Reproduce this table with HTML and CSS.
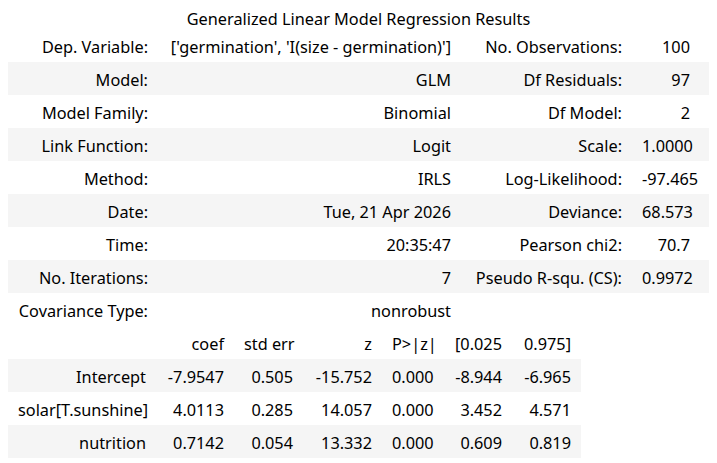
FILE: index.html
```html
<!DOCTYPE html>
<html>
<head>
<meta charset="utf-8">
<title>Generalized Linear Model Regression Results</title>
<link rel="stylesheet" href="styles.css">
</head>
<body>
<div class="summary">
  <table class="simpletable info">
    <caption>Generalized Linear Model Regression Results</caption>
    <colgroup>
      <col class="i1"><col class="i2"><col class="i3"><col class="i4">
    </colgroup>
    <tbody>
      <tr><th>Dep. Variable:</th><td>['germination', 'I(size - germination)']</td><th>No. Observations:</th><td class="last">100</td></tr>
      <tr class="alt"><th>Model:</th><td>GLM</td><th>Df Residuals:</th><td class="last">97</td></tr>
      <tr><th>Model Family:</th><td>Binomial</td><th>Df Model:</th><td class="last">2</td></tr>
      <tr class="alt"><th>Link Function:</th><td>Logit</td><th>Scale:</th><td class="last">1.0000</td></tr>
      <tr><th>Method:</th><td>IRLS</td><th>Log-Likelihood:</th><td class="last">-97.465</td></tr>
      <tr class="alt"><th>Date:</th><td>Tue, 21 Apr 2026</td><th>Deviance:</th><td class="last">68.573</td></tr>
      <tr><th>Time:</th><td>20:35:47</td><th>Pearson chi2:</th><td class="last">70.7</td></tr>
      <tr class="alt"><th>No. Iterations:</th><td>7</td><th>Pseudo R-squ. (CS):</th><td class="last">0.9972</td></tr>
      <tr><th>Covariance Type:</th><td>nonrobust</td><th></th><td class="last"></td></tr>
    </tbody>
  </table>
  <table class="simpletable coefs">
    <colgroup>
      <col class="c1"><col class="c2"><col class="c3"><col class="c4"><col class="c5"><col class="c6"><col class="c7">
    </colgroup>
    <thead>
      <tr><th></th><th>coef</th><th>std err</th><th>z</th><th>P&gt;|z|</th><th>[0.025</th><th>0.975]</th></tr>
    </thead>
    <tbody>
      <tr class="alt"><th>Intercept</th><td>-7.9547</td><td>0.505</td><td>-15.752</td><td>0.000</td><td>-8.944</td><td>-6.965</td></tr>
      <tr><th>solar[T.sunshine]</th><td>4.0113</td><td>0.285</td><td>14.057</td><td>0.000</td><td>3.452</td><td>4.571</td></tr>
      <tr class="alt"><th>nutrition</th><td>0.7142</td><td>0.054</td><td>13.332</td><td>0.000</td><td>0.609</td><td>0.819</td></tr>
    </tbody>
  </table>
</div>
</body>
</html>
```
FILE: styles.css
```css
html, body {
  margin: 0;
  padding: 0;
  background: #ffffff;
}

body {
  font-family: "Noto Sans", "Open Sans", sans-serif;
  font-size: 16.3px;
  color: #000000;
}

.summary {
  padding: 0 8px;
}

.simpletable {
  border-collapse: collapse;
  border-spacing: 0;
  table-layout: fixed;
}

.simpletable caption {
  padding: 10px 0 0;
  height: 19px;
  line-height: 19px;
  text-align: center;
  white-space: nowrap;
}

.simpletable th,
.simpletable td {
  height: 33px;
  box-sizing: border-box;
  padding: 4px 10px 0;
  line-height: 29px;
  font-weight: normal;
  text-align: right;
  white-space: nowrap;
  vertical-align: top;
}

.simpletable tr.alt {
  background: #f5f5f5;
}

.info {
  width: 701px;
}

.info .i1 { width: 150px; }
.info .i2 { width: 303px; }
.info .i3 { width: 171px; }
.info .i4 { width: 77px; }

.info td.last {
  padding-right: 19px;
}

.coefs {
  width: 573px;
}

.coefs .c1 { width: 148px; }
.coefs .c2 { width: 78px; }
.coefs .c3 { width: 69px; }
.coefs .c4 { width: 79px; }
.coefs .c5 { width: 61px; }
.coefs .c6 { width: 69px; }
.coefs .c7 { width: 69px; }
```
